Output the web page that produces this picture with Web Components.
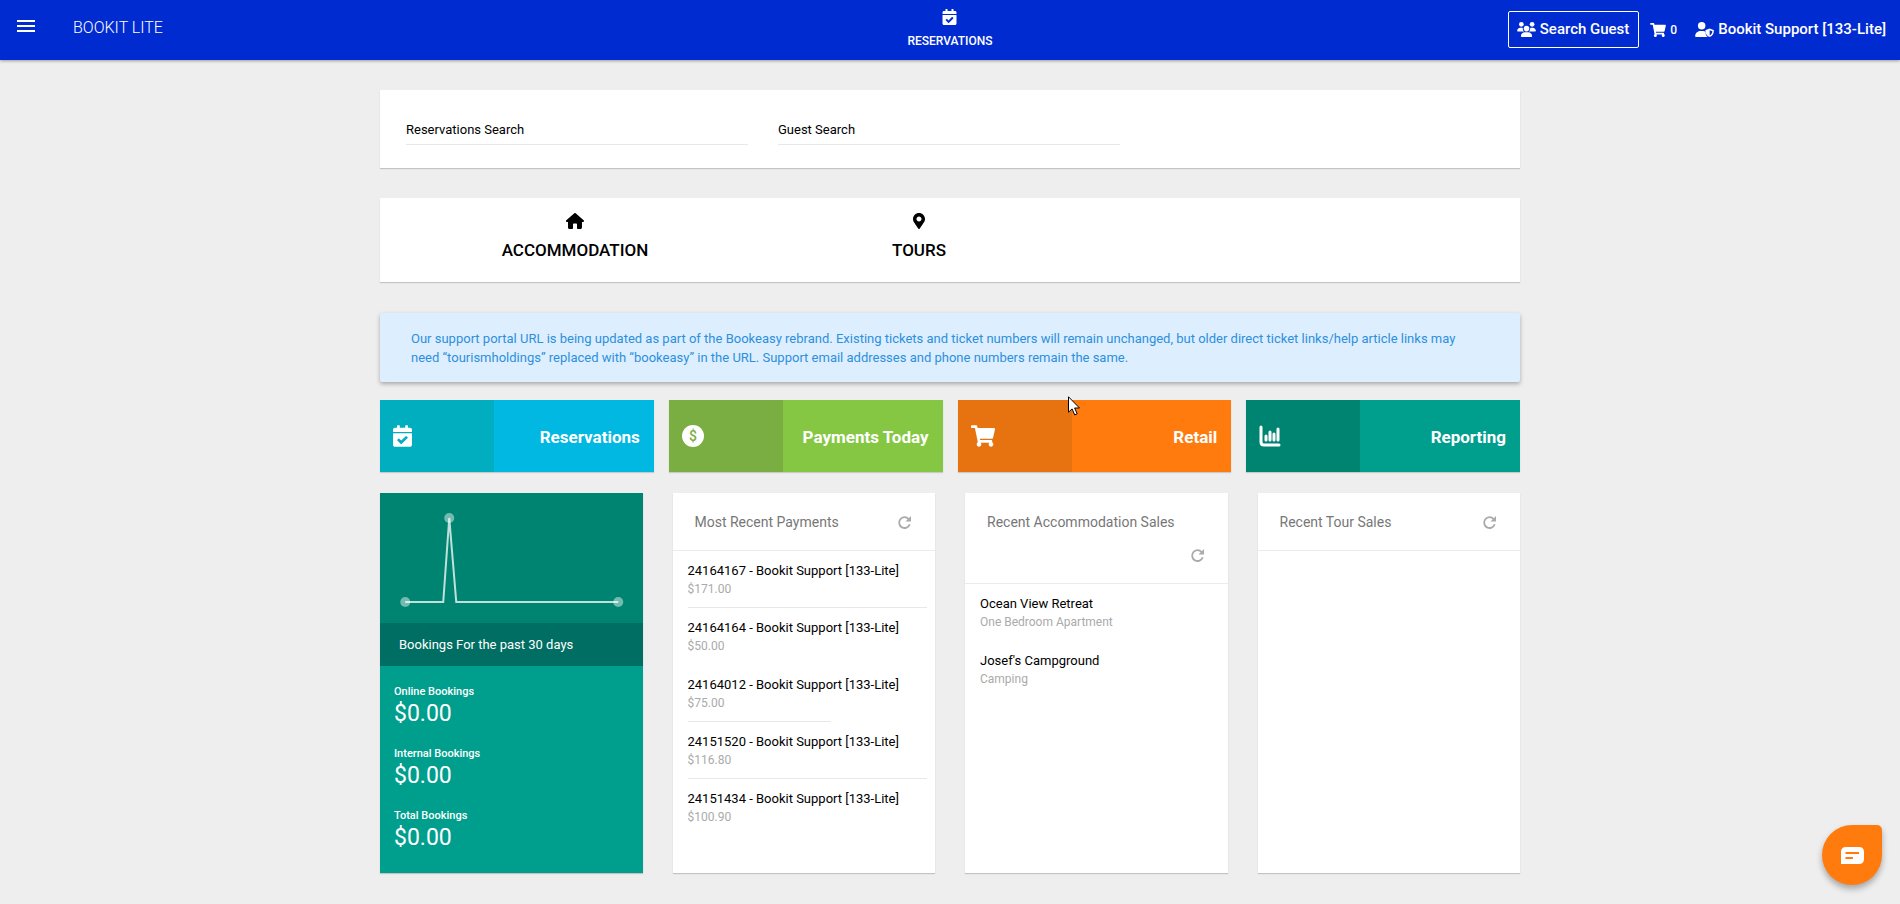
<!DOCTYPE html>
<html lang="en">
<head>
<meta charset="utf-8">
<meta name="viewport" content="width=device-width, initial-scale=1">
<title>Bookit Lite</title>
<style>
  body {
    margin: 0; min-height: 100vh; background: #eee; color: #000;
    font-family: Roboto, "Liberation Sans", sans-serif; font-size: 13px;
  }
</style>
</head>
<body>
<bk-dashboard></bk-dashboard>

<script>
const icons = {
  menu: ['0 0 18 12', '<path d="M0 0h18v2H0zM0 5h18v2H0zM0 10h18v2H0z"/>'],
  calendar: ['0 0 448 512', '<path d="M436 160H12c-6.627 0-12-5.373-12-12v-36c0-26.51 21.49-48 48-48h48V12c0-6.627 5.373-12 12-12h40c6.627 0 12 5.373 12 12v52h128V12c0-6.627 5.373-12 12-12h40c6.627 0 12 5.373 12 12v52h48c26.51 0 48 21.49 48 48v36c0 6.627-5.373 12-12 12zM12 192h424c6.627 0 12 5.373 12 12v260c0 26.51-21.49 48-48 48H48c-26.51 0-48-21.49-48-48V204c0-6.627 5.373-12 12-12zm333.296 95.947l-28.169-28.398c-4.667-4.705-12.265-4.736-16.97-.068L194.12 364.665l-45.98-46.352c-4.667-4.705-12.266-4.736-16.971-.068l-28.397 28.17c-4.705 4.667-4.736 12.265-.068 16.97l82.601 83.269c4.667 4.705 12.265 4.736 16.97.068l142.953-141.805c4.705-4.667 4.736-12.265.068-16.97z"/>'],
  cart: ['0 0 576 512', '<path d="M528.12 301.319l47.273-208C578.806 78.301 567.391 64 551.99 64H159.208l-9.166-44.81C147.758 8.021 137.93 0 126.529 0H24C10.745 0 0 10.745 0 24v16c0 13.255 10.745 24 24 24h69.883l70.248 343.435C147.325 417.1 136 435.222 136 456c0 30.928 25.072 56 56 56s56-25.072 56-56c0-15.674-6.447-29.835-16.824-40h209.647C430.447 426.165 424 440.326 424 456c0 30.928 25.072 56 56 56s56-25.072 56-56c0-22.172-12.888-41.332-31.579-50.405l5.517-24.276c3.413-15.018-8.002-29.319-23.403-29.319H218.117l-6.545-32h293.145c11.206 0 20.92-7.754 23.403-18.681z"/>'],
  users: ['0 0 640 512', '<circle cx="144" cy="80" r="80"/><circle cx="512" cy="80" r="80"/><path d="M0 299c0-59 48-107 107-107h42c16 0 31 4 45 10a128 128 0 0 0 41 118H21c-12 0-21-9-21-21zM405 320a128 128 0 0 0 41-118c14-6 29-10 45-10h42c59 0 107 48 107 107 0 12-9 21-21 21z"/><circle cx="320" cy="224" r="96"/><path d="M128 485c0-74 60-133 133-133h118c73 0 133 59 133 133 0 15-12 27-27 27H155c-15 0-27-12-27-27z"/>'],
  user: ['0 0 640 512', '<circle cx="224" cy="128" r="128"/><path d="M0 482c0-98 80-178 178-178h92c33 0 64 9 90 25-10 72 14 140 66 183H30c-17 0-30-13-30-30z"/><path fill-rule="evenodd" d="M496 225l135 52c10 4 9 12 9 18 0 86-40 180-144 217-104-37-144-131-144-217 0-6-1-14 9-18zm0 54v179c58-27 88-80 93-143z"/>'],
  home: ['0 0 576 512', '<path d="M575 256c0 18-15 32-32 32h-32v176c0 26-21 48-48 48h-79c-18 0-32-14-32-32V368c0-18-14-32-32-32h-64c-18 0-32 14-32 32v112c0 18-14 32-32 32h-80c-26 0-48-22-48-48V288H32c-18 0-32-14-32-32 0-9 3-17 10-24L266 8c7-7 15-8 22-8s15 2 21 7l255 225c8 7 12 15 11 24z"/>'],
  pin: ['0 0 384 512', '<path d="M172.268 501.67C26.97 291.031 0 269.413 0 192 0 85.961 85.961 0 192 0s192 85.961 192 192c0 77.413-26.97 99.031-172.268 309.67-9.535 13.774-29.93 13.773-39.464 0zM192 272c44.183 0 80-35.817 80-80s-35.817-80-80-80-80 35.817-80 80 35.817 80 80 80z"/>'],
  dollar: ['0 0 22 22', '<circle cx="11" cy="11" r="11"/><text x="11" y="16" font-size="14" font-weight="500" text-anchor="middle" style="fill: var(--tile-dark)">$</text>'],
  chart: ['0 0 22 22', '<path d="M2 2v15q0 3 3 3h15" fill="none" stroke="currentColor" stroke-width="3" stroke-linecap="round"/><path d="M7 11v4M11 7v8M15 9v6M19 4v11" fill="none" stroke="currentColor" stroke-width="3" stroke-linecap="round"/>'],
  refresh: ['0 0 13 13', '<path d="M10.600 3A5.400 5.400 0 1 0 11.700 8.200" fill="none" stroke="currentColor" stroke-width="1.800"/><path d="M13 0v5.500H7.500z"/>'],
  chat: ['0 0 23 17', '<path fill-rule="evenodd" d="M5 0h13q5 0 5 5v7q0 5-5 5H0V5q0-5 5-5zM4.500 5v2H18V5zm0 5v2H12v-2z"/>'],
  pointer: ['0 0 12 20', '<path d="M.5.8v15.400l3.600-3.300 2.600 6 2.500-1.100-2.600-5.800h4.900z" fill="#fff" stroke="#000"/>']
};

class BkIcon extends HTMLElement {
  constructor() {
    super();
    this.attachShadow({ mode: 'open' });
  }

  connectedCallback() {
    const [box, shape] = icons[this.getAttribute('name')];
    this.shadowRoot.innerHTML = `
      <style>
        :host { display: inline-block; flex: none; width: 16px; height: 16px; }
        svg { display: block; width: 100%; height: 100%; overflow: visible; }
      </style>
      <svg viewBox="${box}" fill="currentColor" aria-hidden="true">${shape}</svg>
    `;
  }
}

class BkHeader extends HTMLElement {
  constructor() {
    super();
    this.attachShadow({ mode: 'open' });
    this.shadowRoot.innerHTML = `
      <style>
        :host { display: block; }
        header {
          display: grid; grid-template-columns: 1fr auto 1fr; align-items: center;
          height: 60px; box-sizing: border-box; padding-bottom: 2px; background: #002bd1; color: #fff;
          box-shadow: 0 1px 3px rgba(0,0,0,0.35);
        }
        button { background: none; border: 0; padding: 0; color: inherit; font: inherit; cursor: pointer; }
        a { color: inherit; text-decoration: none; }
        .brand { display: flex; align-items: center; gap: 38px; padding: 0 0 6px 17px; }
        .menu bk-icon { display: block; width: 18px; height: 12px; }
        .brand a { font-size: 16px; font-weight: 300; padding-top: 2px; }
        .nav {
          display: flex; flex-direction: column; align-items: center; gap: 8px;
          font-size: 12px; font-weight: 500; line-height: 16px;
        }
        .nav bk-icon { width: 15px; }
        .tools {
          display: flex; align-items: center; justify-content: flex-end;
          font-size: 15px; font-weight: 500; padding-right: 14px;
        }
        .tools button, .tools a { display: flex; align-items: center; gap: 4px; white-space: nowrap; }
        .search { height: 37px; border: 1px solid #fff; border-radius: 2px; padding: 0 9px 0 8px; }
        .search bk-icon { width: 19px; height: 15px; }
        .tools .cart { margin: 0 18px 0 11px; padding-top: 2px; font-size: 12px; }
        .cart bk-icon { height: 14px; }
        .user bk-icon { width: 19px; height: 15px; }
      </style>
      <header>
        <div class="brand">
          <button type="button" class="menu" aria-label="Menu"><bk-icon name="menu"></bk-icon></button>
          <a href="#">BOOKIT LITE</a>
        </div>
        <a class="nav" href="#"><bk-icon name="calendar"></bk-icon>RESERVATIONS</a>
        <div class="tools">
          <button type="button" class="search"><bk-icon name="users"></bk-icon>Search Guest</button>
          <a class="cart" href="#"><bk-icon name="cart"></bk-icon>0</a>
          <a class="user" href="#"><bk-icon name="user"></bk-icon>Bookit Support [133-Lite]</a>
        </div>
      </header>
    `;
  }
}

// White box that every section of the page sits in
class BkCard extends HTMLElement {
  constructor() {
    super();
    this.attachShadow({ mode: 'open' });
    this.shadowRoot.innerHTML = `
      <style>
        :host { display: block; background: #fff; box-shadow: 0 1px 1px rgba(0,0,0,0.18); }
      </style>
      <slot></slot>
    `;
  }
}

class BkSearchField extends HTMLElement {
  constructor() {
    super();
    this.attachShadow({ mode: 'open' });
  }

  connectedCallback() {
    this.shadowRoot.innerHTML = `
      <style>
        :host { display: grid; }
        label, input { grid-area: 1 / 1; }
        label { line-height: 29px; pointer-events: none; z-index: 1; }
        input {
          width: 100%; height: 30px; box-sizing: border-box; padding: 0;
          border: 0; border-bottom: 1px solid #e8e8e8; background: none; font: inherit; outline: none;
        }
        input:focus { border-color: #002bd1; }
        label:has(+ input:not(:placeholder-shown)) { visibility: hidden; }
      </style>
      <label for="query">${this.getAttribute('label')}</label>
      <input id="query" type="text" placeholder=" ">
    `;
  }
}

class BkProduct extends HTMLElement {
  constructor() {
    super();
    this.attachShadow({ mode: 'open' });
  }

  connectedCallback() {
    this.shadowRoot.innerHTML = `
      <style>
        :host { display: block; }
        a {
          display: flex; flex-direction: column; align-items: center; gap: 10px;
          color: inherit; text-decoration: none; font-size: 17px; font-weight: 500; line-height: 22px;
        }
        bk-icon { width: 18px; }
      </style>
      <a href="#"><bk-icon name="${this.getAttribute('icon')}"></bk-icon><slot></slot></a>
    `;
  }
}

class BkNotice extends HTMLElement {
  constructor() {
    super();
    this.attachShadow({ mode: 'open' });
    this.shadowRoot.innerHTML = `
      <style>
        :host {
          display: block; padding: 16px 46px 15px 31px; background: #def; color: #2d90dc;
          line-height: 19px; border-radius: 2px; box-shadow: 0 2px 4px rgba(0,0,0,0.3);
        }
      </style>
      <slot></slot>
    `;
  }
}

class BkTile extends HTMLElement {
  constructor() {
    super();
    this.attachShadow({ mode: 'open' });
  }

  connectedCallback() {
    this.shadowRoot.innerHTML = `
      <style>
        :host { display: block; box-shadow: 0 1px 1px rgba(0,0,0,0.15); }
        a {
          display: grid; grid-template-columns: 5fr 7fr; height: 72px;
          color: #fff; text-decoration: none; font-size: 17px; font-weight: 700;
        }
        .icon, .text { display: flex; align-items: center; }
        .icon { background: var(--tile-dark); padding-left: 13px; }
        .text { background: var(--tile); justify-content: flex-end; padding: 2px 14px 0 0; white-space: nowrap; }
        bk-icon { width: var(--icon-width, 22px); height: 22px; }
      </style>
      <a href="#">
        <span class="icon"><bk-icon name="${this.getAttribute('icon')}"></bk-icon></span>
        <span class="text"><slot></slot></span>
      </a>
    `;
  }
}

class BkBookings extends HTMLElement {
  constructor() {
    super();
    this.attachShadow({ mode: 'open' });
    this.shadowRoot.innerHTML = `
      <style>
        :host {
          display: flex; flex-direction: column; background: #009e8c; color: #fff;
          box-shadow: 0 1px 1px rgba(0,0,0,0.18);
        }
        .chart { background: #008472; height: 130px; }
        .chart svg { display: block; width: 100%; height: 100%; }
        h2 { margin: 0; padding: 0 19px; background: #006e62; font-size: 13px; font-weight: 400; line-height: 43px; }
        dl { margin: 0; padding: 18px 14px 0; }
        dt { font-size: 11px; font-weight: 500; line-height: 16px; }
        dd { margin: 0 0 18px; font-size: 23px; line-height: 28px; }
      </style>
      <div class="chart">
        <svg viewBox="0 0 262 130" role="img" aria-label="Bookings per day">
          <path d="M25 109h38l6-84 7 84h162" fill="none" stroke="#fff" stroke-opacity=".75" stroke-width="2"/>
          <g fill="#fff" fill-opacity=".45">
            <circle cx="25" cy="109" r="5"/><circle cx="69" cy="25" r="5"/><circle cx="238" cy="109" r="5"/>
          </g>
        </svg>
      </div>
      <h2>Bookings For the past 30 days</h2>
      <dl>
        <dt>Online Bookings</dt><dd>$0.00</dd>
        <dt>Internal Bookings</dt><dd>$0.00</dd>
        <dt>Total Bookings</dt><dd>$0.00</dd>
      </dl>
    `;
  }
}

class BkRecent extends HTMLElement {
  constructor() {
    super();
    this.attachShadow({ mode: 'open' });
  }

  connectedCallback() {
    this.shadowRoot.innerHTML = `
      <style>
        :host { display: block; background: #fff; box-shadow: 0 1px 1px rgba(0,0,0,0.18); }
        header {
          display: flex; flex-wrap: wrap; align-items: center; gap: 0 16px;
          padding: 13px 24px 11px 22px; border-bottom: 1px solid #ebebeb;
        }
        h2 { margin: 0; font-size: 14px; font-weight: 400; line-height: 33px; color: #777; white-space: nowrap; }
        button {
          display: flex; align-items: center; margin-left: auto; height: 33px;
          padding: 0; border: 0; background: none; color: #aaa; cursor: pointer;
        }
        :host([stacked]) h2 { flex: 1 0 100%; }
        bk-icon { width: 13px; height: 13px; }
      </style>
      <header>
        <h2>${this.getAttribute('heading')}</h2>
        <button type="button" aria-label="Refresh ${this.getAttribute('heading')}"><bk-icon name="refresh"></bk-icon></button>
      </header>
      <slot></slot>
    `;
  }
}

class BkEntry extends HTMLElement {
  constructor() {
    super();
    this.attachShadow({ mode: 'open' });
    this.shadowRoot.innerHTML = `
      <style>
        :host { display: block; padding: 11px 8px 0 15px; line-height: 18px; }
        .detail { display: block; font-size: 12px; color: #aaa; }
        hr { margin: 9px 0 0; border: 0; height: 1px; width: var(--rule, 0); background: #e8e8e8; }
        :host([rule="full"]) { --rule: 100%; }
        :host([rule="half"]) { --rule: 60%; }
      </style>
      <slot></slot>
      <span class="detail"><slot name="detail"></slot></span>
      <hr>
    `;
  }
}

class BkDashboard extends HTMLElement {
  constructor() {
    super();
    this.attachShadow({ mode: 'open' });
    this.shadowRoot.innerHTML = `
      <style>
        :host { display: block; }
        main { width: 60%; min-width: 960px; margin: 0 auto; padding: 30px 0; position: relative; }
        .search { display: flex; gap: 30px; padding: 25px 26px 23px; margin-bottom: 30px; }
        .search bk-search-field { flex: 0 1 342px; }
        .products {
          display: grid; grid-template-columns: repeat(3, minmax(0, 344px));
          padding: 15px 23px 21px; margin-bottom: 31px;
        }
        .tiles { display: grid; grid-template-columns: repeat(4, 1fr); gap: 15px; margin: 18px 0 21px; }
        .panels { display: grid; grid-template-columns: repeat(4, 1fr); gap: 30px; min-height: 380px; }
        .reservations { --tile: #00b8e2; --tile-dark: #00aebf; --icon-width: 19px; }
        .payments { --tile: #85c743; --tile-dark: #7bae42; }
        .retail { --tile: #ff7b0e; --tile-dark: #e67310; --icon-width: 24px; }
        .reporting { --tile: #009e8c; --tile-dark: #008472; }
        .pointer { position: absolute; left: 688px; top: 336px; width: 12px; height: 20px; pointer-events: none; }
        .chat {
          position: fixed; right: 18px; bottom: 19px; width: 60px; height: 60px; padding: 0;
          display: flex; align-items: center; justify-content: center;
          border: 0; border-radius: 50% 5px 50% 50%; background: #ff7b0e; color: #fff;
          box-shadow: 0 4px 6px rgba(0,0,0,0.3); cursor: pointer;
        }
        .chat bk-icon { width: 23px; height: 17px; }
      </style>
      <bk-header></bk-header>
      <main>
        <bk-card class="search">
          <bk-search-field label="Reservations Search"></bk-search-field>
          <bk-search-field label="Guest Search"></bk-search-field>
        </bk-card>
        <bk-card class="products">
          <bk-product icon="home">ACCOMMODATION</bk-product>
          <bk-product icon="pin">TOURS</bk-product>
        </bk-card>
        <bk-notice>Our support portal URL is being updated as part of the Bookeasy rebrand. Existing tickets and ticket numbers will remain unchanged, but older direct ticket links/help article links may need “tourismholdings” replaced with “bookeasy” in the URL. Support email addresses and phone numbers remain the same.</bk-notice>
        <div class="tiles">
          <bk-tile class="reservations" icon="calendar">Reservations</bk-tile>
          <bk-tile class="payments" icon="dollar">Payments Today</bk-tile>
          <bk-tile class="retail" icon="cart">Retail</bk-tile>
          <bk-tile class="reporting" icon="chart">Reporting</bk-tile>
        </div>
        <div class="panels">
          <bk-bookings></bk-bookings>
          <bk-recent heading="Most Recent Payments">
            <bk-entry rule="full">24164167 - Bookit Support [133-Lite]<span slot="detail">$171.00</span></bk-entry>
            <bk-entry>24164164 - Bookit Support [133-Lite]<span slot="detail">$50.00</span></bk-entry>
            <bk-entry rule="half">24164012 - Bookit Support [133-Lite]<span slot="detail">$75.00</span></bk-entry>
            <bk-entry rule="full">24151520 - Bookit Support [133-Lite]<span slot="detail">$116.80</span></bk-entry>
            <bk-entry>24151434 - Bookit Support [133-Lite]<span slot="detail">$100.90</span></bk-entry>
          </bk-recent>
          <bk-recent heading="Recent Accommodation Sales" stacked>
            <bk-entry>Ocean View Retreat<span slot="detail">One Bedroom Apartment</span></bk-entry>
            <bk-entry>Josef's Campground<span slot="detail">Camping</span></bk-entry>
          </bk-recent>
          <bk-recent heading="Recent Tour Sales"></bk-recent>
        </div>
        <bk-icon class="pointer" name="pointer"></bk-icon>
      </main>
      <button type="button" class="chat" aria-label="Chat"><bk-icon name="chat"></bk-icon></button>
    `;
  }
}

customElements.define('bk-icon', BkIcon);
customElements.define('bk-header', BkHeader);
customElements.define('bk-card', BkCard);
customElements.define('bk-search-field', BkSearchField);
customElements.define('bk-product', BkProduct);
customElements.define('bk-notice', BkNotice);
customElements.define('bk-tile', BkTile);
customElements.define('bk-bookings', BkBookings);
customElements.define('bk-recent', BkRecent);
customElements.define('bk-entry', BkEntry);
customElements.define('bk-dashboard', BkDashboard);
</script>
</body>
</html>
